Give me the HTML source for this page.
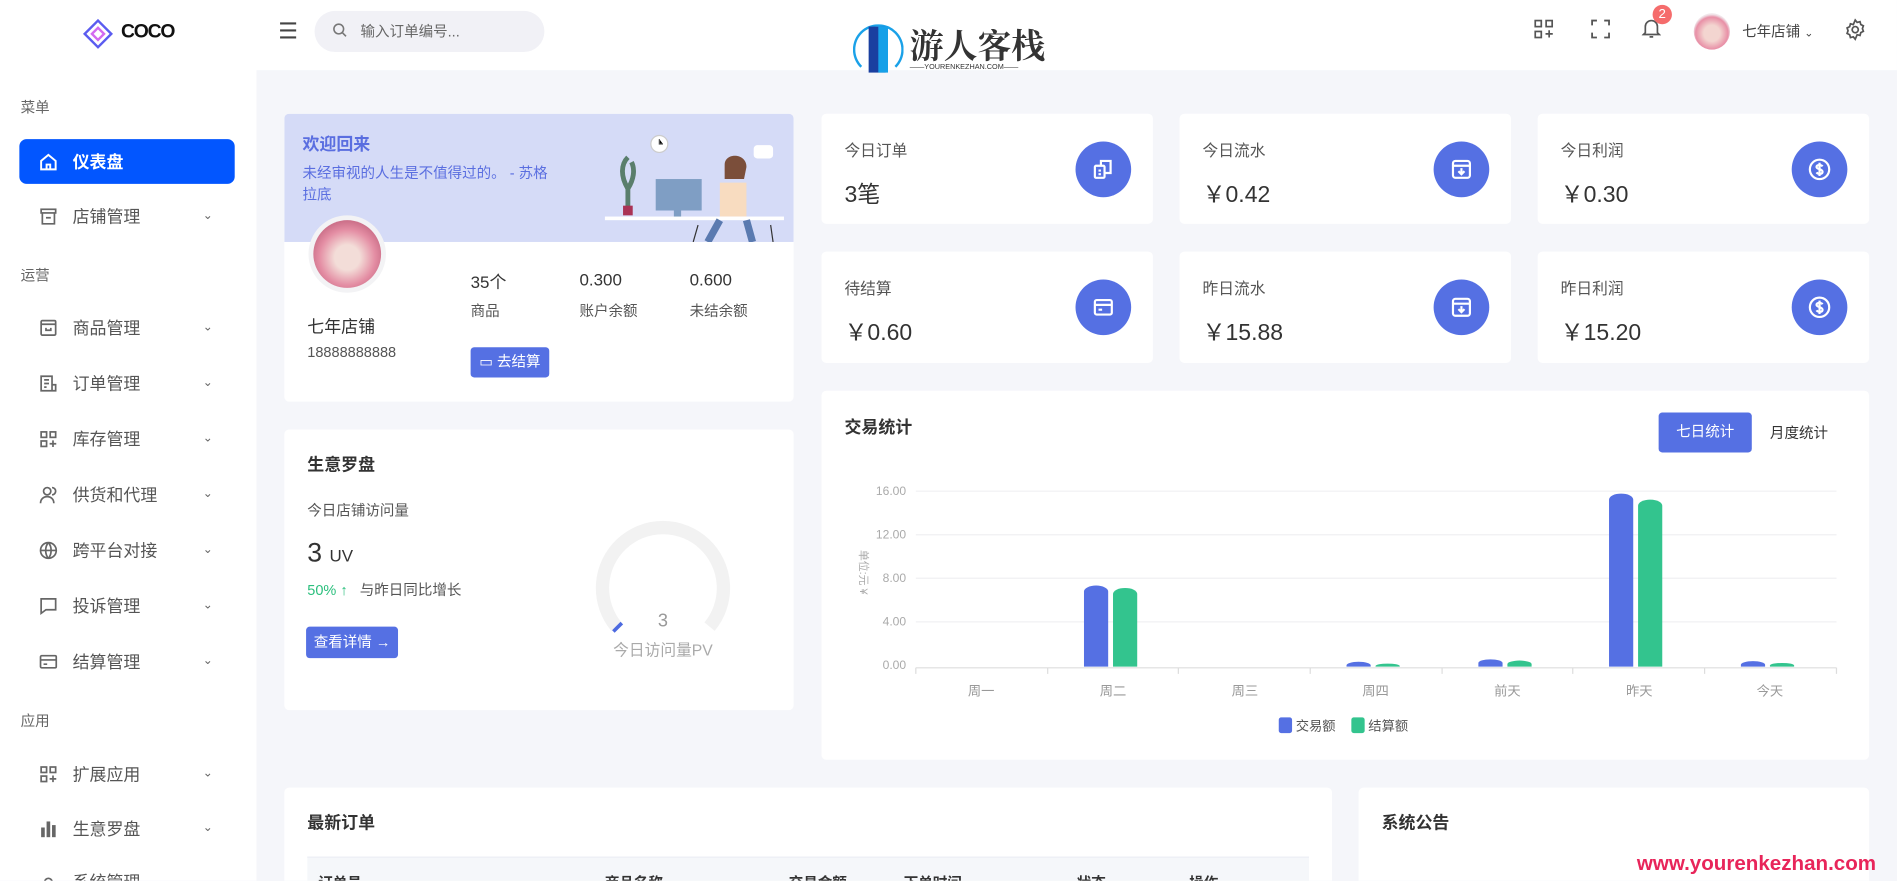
<!DOCTYPE html>
<html><head><meta charset="utf-8"><style>
*{box-sizing:border-box;margin:0;padding:0}
html,body{width:1897px;height:881px;overflow:hidden;background:#f5f6fa}
body{font-family:"Liberation Sans","Noto Sans CJK SC",sans-serif;color:#333}
#w{position:absolute;left:0;top:0;width:1568px;height:728px;transform:scale(1.2098);transform-origin:0 0;background:#f5f6fa;overflow:hidden}
.a{position:absolute}
.card{position:absolute;background:#fff;border-radius:4px}
.side{left:0;top:0;width:212px;height:728px;background:#fff}
.sec{position:absolute;left:17px;font-size:12px;color:#666}
.item{position:absolute;left:16px;width:178px;height:37px;font-size:14px;color:#555;display:flex;align-items:center}
.item svg{margin-left:16px;margin-right:12px}
.item .ch{position:absolute;right:18px;font-size:10px;color:#666}
.lbl{font-size:13px;color:#555}
.val{font-size:19px;color:#333}
.ic{position:absolute;width:46px;height:46px;border-radius:50%;background:#5570e3;display:flex;align-items:center;justify-content:center}
.t{font-size:14px;font-weight:bold;color:#333}
</style></head><body><div id="w">
<div class="a" style="left:0;top:0;width:1568px;height:58px;background:#fff"></div>
<div class="a side"></div>
<svg class="a" style="left:68px;top:15px" width="26" height="26" viewBox="0 0 26 26"><path d="M13 2 L24 13 L13 24 L2 13Z" fill="none" stroke="#5b5cf0" stroke-width="2"/><path d="M8 13 L13 8 L18 13 L13 18Z" fill="none" stroke="#d36bf0" stroke-width="2"/></svg>
<div class="a" style="left:100px;top:18px;font-size:16px;font-weight:bold;color:#111;letter-spacing:-1px">COCO</div>
<div class="a" style="left:230px;top:16px;font-size:18px;color:#444">☰</div>
<div class="a" style="left:260px;top:9px;width:190px;height:34px;border-radius:17px;background:#f1f1f6"></div>
<svg class="a" style="left:275px;top:19px" width="12" height="12" viewBox="0 0 12 12"><circle cx="5" cy="5" r="4" fill="none" stroke="#777" stroke-width="1.3"/><path d="M8 8l3 3" stroke="#777" stroke-width="1.3"/></svg>
<div class="a" style="left:298px;top:17px;font-size:12px;color:#666">输入订单编号...</div>
<div class="a" style="left:705px;top:20px;width:42px;height:42px;border-radius:50%;border:2px solid #1aa1e8;border-bottom-color:transparent"></div>
<div class="a" style="left:718px;top:22px;width:14px;height:38px;background:#1a3fa0"></div>
<div class="a" style="left:726px;top:22px;width:8px;height:38px;background:#16a0e8"></div>
<div class="a" style="left:752px;top:17px;font-size:28px;font-weight:bold;color:#333;font-family:'Noto Serif CJK SC',serif">游人客栈</div>
<div class="a" style="left:752px;top:53px;font-size:6px;color:#333">——YOURENKEZHAN.COM——</div>
<svg class="a" style="left:1268px;top:16px" width="16" height="16" viewBox="0 0 16 16" fill="none" stroke="#555" stroke-width="1.4"><rect x="1" y="1" width="5" height="5"/><rect x="10" y="1" width="5" height="5"/><rect x="1" y="10" width="5" height="5"/><path d="M12.5 9v6M9.5 12h6"/></svg>
<svg class="a" style="left:1315px;top:16px" width="16" height="16" viewBox="0 0 16 16" fill="none" stroke="#555" stroke-width="1.5"><path d="M1 5V1h4M11 1h4v4M15 11v4h-4M5 15H1v-4"/></svg>
<svg class="a" style="left:1357px;top:14px" width="16" height="18" viewBox="0 0 16 18" fill="none" stroke="#555" stroke-width="1.4"><path d="M3 13V8a5 5 0 0 1 10 0v5l1.5 1.5h-13Z"/><path d="M6.5 16.5h3"/></svg>
<div class="a" style="left:1366px;top:4px;width:16px;height:16px;border-radius:8px;background:#f56c6c;color:#fff;font-size:11px;text-align:center;line-height:16px">2</div>
<div class="a" style="left:1400px;top:11px;width:30px;height:30px;border-radius:50%;background:radial-gradient(circle at 50% 55%,#f3d5d0 30%,#e88fa6 60%,#f0e6ea 70%)"></div>
<div class="a" style="left:1440px;top:17px;font-size:12px;color:#444">七年店铺 <span style="font-size:9px">⌄</span></div>
<svg class="a" style="left:1524px;top:15px" width="19" height="19" viewBox="0 0 24 24" fill="none" stroke="#555" stroke-width="1.8"><circle cx="12" cy="12" r="3.2"/><path d="M12 2l2 2.5 3-.8.8 3 2.7 1.3-1 2.9 1 2.9-2.7 1.3-.8 3-3-.8L12 22l-2-2.5-3 .8-.8-3L3.5 16l1-2.9-1-2.9L6.2 8.9l.8-3 3 .8Z"/></svg>
<div class="sec" style="top:80px">菜单</div>
<div class="item" style="top:115px;background:#0256ff;border-radius:6px;color:#fff;font-weight:bold"><svg width="16" height="16" viewBox="0 0 16 16" fill="none" stroke="#fff" stroke-width="1.6"><path d="M2 7l6-5 6 5v7H2Z"/><path d="M6.5 14v-4h3v4"/></svg>仪表盘</div>
<div class="item" style="top:160px"><svg width="16" height="16" viewBox="0 0 16 16" fill="none" stroke="#666" stroke-width="1.4"><rect x="2" y="2" width="12" height="3"/><path d="M3 5v9h10V5M6 9h4"/></svg>店铺管理<span class="ch">⌄</span></div>
<div class="sec" style="top:219px">运营</div>
<div class="item" style="top:252px"><svg width="16" height="16" viewBox="0 0 16 16" fill="none" stroke="#666" stroke-width="1.4"><rect x="2" y="2" width="12" height="12" rx="1"/><path d="M2 5h12M6 8v2h4V8"/></svg>商品管理<span class="ch">⌄</span></div>
<div class="item" style="top:298px"><svg width="16" height="16" viewBox="0 0 16 16" fill="none" stroke="#666" stroke-width="1.4"><path d="M11 14H2V2h9v12h3V9h-3M4.5 5h4M4.5 8h4M4.5 11h2"/></svg>订单管理<span class="ch">⌄</span></div>
<div class="item" style="top:344px"><svg width="16" height="16" viewBox="0 0 16 16" fill="none" stroke="#666" stroke-width="1.4"><rect x="2" y="2" width="4.5" height="4.5"/><rect x="9.5" y="2" width="4.5" height="4.5"/><rect x="2" y="9.5" width="4.5" height="4.5"/><path d="M11.8 9v5.5M9 11.8h5.5"/></svg>库存管理<span class="ch">⌄</span></div>
<div class="item" style="top:390px"><svg width="16" height="16" viewBox="0 0 16 16" fill="none" stroke="#666" stroke-width="1.4"><circle cx="7" cy="5" r="3"/><path d="M1.5 15c0-3.5 2.5-5.5 5.5-5.5s5.5 2 5.5 5.5M11 2a3 3 0 0 1 0 6"/></svg>供货和代理<span class="ch">⌄</span></div>
<div class="item" style="top:436px"><svg width="16" height="16" viewBox="0 0 16 16" fill="none" stroke="#666" stroke-width="1.4"><circle cx="8" cy="8" r="6.5"/><path d="M1.5 8h13M8 1.5c-3 3.5-3 9.5 0 13M8 1.5c3 3.5 3 9.5 0 13"/></svg>跨平台对接<span class="ch">⌄</span></div>
<div class="item" style="top:482px"><svg width="16" height="16" viewBox="0 0 16 16" fill="none" stroke="#666" stroke-width="1.4"><path d="M2 2h12v9H6l-4 3Z"/></svg>投诉管理<span class="ch">⌄</span></div>
<div class="item" style="top:528px"><svg width="16" height="16" viewBox="0 0 16 16" fill="none" stroke="#666" stroke-width="1.4"><rect x="1.5" y="3" width="13" height="10" rx="1"/><path d="M1.5 6.5h13M4 10h3"/></svg>结算管理<span class="ch">⌄</span></div>
<div class="sec" style="top:587px">应用</div>
<div class="item" style="top:621px"><svg width="16" height="16" viewBox="0 0 16 16" fill="none" stroke="#666" stroke-width="1.4"><rect x="2" y="2" width="4.5" height="4.5"/><rect x="9.5" y="2" width="4.5" height="4.5"/><rect x="2" y="9.5" width="4.5" height="4.5"/><path d="M11.8 9v5.5M9 11.8h5.5"/></svg>扩展应用<span class="ch">⌄</span></div>
<div class="item" style="top:666px"><svg width="16" height="16" viewBox="0 0 16 16" fill="#666"><rect x="2" y="7" width="3" height="8"/><rect x="6.5" y="2" width="3" height="13"/><rect x="11" y="5" width="3" height="10"/></svg>生意罗盘<span class="ch">⌄</span></div>
<div class="item" style="top:710px"><svg width="16" height="16" viewBox="0 0 16 16" fill="none" stroke="#666" stroke-width="1.4"><circle cx="8" cy="8" r="3"/></svg>系统管理<span class="ch">⌄</span></div>
<div class="card" style="left:235px;top:94px;width:421px;height:238px;overflow:hidden">
<div class="a" style="left:0;top:0;width:421px;height:106px;background:#d5dbf7"></div>
<div class="a" style="left:15px;top:15px;font-size:14px;font-weight:bold;color:#5a6ee0">欢迎回来</div>
<div class="a" style="left:15px;top:40px;width:206px;font-size:12px;line-height:18px;color:#5a6ee0">未经审视的人生是不值得过的。 - 苏格拉底</div>
<svg class="a" style="left:262px;top:12px" width="155" height="94" viewBox="0 0 155 94"><circle cx="48" cy="13" r="7" fill="#fff" stroke="#ccc"/><path d="M48 9v4h3" stroke="#555"/><rect x="126" y="14" width="16" height="11" rx="3" fill="#fff"/><rect x="45" y="42" width="38" height="26" fill="#7f9ec4"/><rect x="60" y="68" width="6" height="6" fill="#7f9ec4"/><rect x="3" y="73" width="148" height="3" fill="#fff"/><path d="M22 70l0-20M22 50c-6-10-6-20 0-26M22 50c5-8 6-16 3-22" stroke="#5a7e6c" stroke-width="4" fill="none"/><rect x="18" y="64" width="8" height="8" fill="#a35"/><circle cx="110" cy="34" r="8" fill="#f5c9a8"/><path d="M102 30c0-10 18-10 18 2l-2 10h-16Z" fill="#7b4e3a"/><path d="M98 45h22v28H98Z" fill="#f8dcc0"/><path d="M98 76l-10 18M120 76l5 18" stroke="#5a7ab0" stroke-width="6"/><path d="M80 80l-4 14M140 80l2 14" stroke="#333"/></svg>
<div class="a" style="left:20px;top:84px;width:64px;height:64px;border-radius:50%;background:#f3f3f5"></div>
<div class="a" style="left:24px;top:88px;width:56px;height:56px;border-radius:50%;background:radial-gradient(circle at 50% 55%,#f3ddd8 25%,#e48ea4 55%,#c96c86 75%,#e6dde2)"></div>
<div class="a" style="left:19px;top:166px;font-size:14px;color:#333">七年店铺</div>
<div class="a" style="left:19px;top:190px;font-size:12px;color:#555">18888888888</div>
<div class="a" style="left:154px;top:129px;font-size:14px">35个</div><div class="a lbl" style="left:154px;top:154px;font-size:12px">商品</div>
<div class="a" style="left:244px;top:129px;font-size:14px">0.300</div><div class="a lbl" style="left:244px;top:154px;font-size:12px">账户余额</div>
<div class="a" style="left:335px;top:129px;font-size:14px">0.600</div><div class="a lbl" style="left:335px;top:154px;font-size:12px">未结余额</div>
<div class="a" style="left:154px;top:193px;width:65px;height:25px;background:#5570e3;border-radius:3px;color:#fff;font-size:12px;line-height:25px;text-align:center">▭ 去结算</div>
</div>
<div class="card" style="left:679px;top:94px;width:274px;height:91px"><div class="a lbl" style="left:19px;top:20px">今日订单</div><div class="a val" style="left:19px;top:52px">3笔</div><div class="ic" style="left:210px;top:23px"><svg width="20" height="20" viewBox="0 0 20 20" fill="none" stroke="#fff" stroke-width="1.8"><rect x="3" y="7" width="8" height="10" rx="1"/><path d="M8 7V3h8v10h-5M6 11h2M6 14h2"/></svg></div></div>
<div class="card" style="left:975px;top:94px;width:274px;height:91px"><div class="a lbl" style="left:19px;top:20px">今日流水</div><div class="a val" style="left:19px;top:52px">￥0.42</div><div class="ic" style="left:210px;top:23px"><svg width="20" height="20" viewBox="0 0 20 20" fill="none" stroke="#fff" stroke-width="1.8"><rect x="3" y="3" width="14" height="14" rx="2"/><path d="M3 7h14M10 9v5M7.5 11.5 10 14l2.5-2.5"/></svg></div></div>
<div class="card" style="left:1271px;top:94px;width:274px;height:91px"><div class="a lbl" style="left:19px;top:20px">今日利润</div><div class="a val" style="left:19px;top:52px">￥0.30</div><div class="ic" style="left:210px;top:23px"><svg width="20" height="20" viewBox="0 0 20 20" fill="none" stroke="#fff" stroke-width="1.8"><circle cx="10" cy="10" r="8"/><path d="M12.5 7.5c-1-1.5-5-1.5-5 .5s5 1.5 5 4-4 2-5 .5M10 4.5v11"/></svg></div></div>
<div class="card" style="left:679px;top:208px;width:274px;height:92px"><div class="a lbl" style="left:19px;top:20px">待结算</div><div class="a val" style="left:19px;top:52px">￥0.60</div><div class="ic" style="left:210px;top:23px"><svg width="20" height="20" viewBox="0 0 20 20" fill="none" stroke="#fff" stroke-width="1.8"><rect x="3" y="4" width="14" height="12" rx="1.5"/><path d="M3 8h14M6 12h3"/></svg></div></div>
<div class="card" style="left:975px;top:208px;width:274px;height:92px"><div class="a lbl" style="left:19px;top:20px">昨日流水</div><div class="a val" style="left:19px;top:52px">￥15.88</div><div class="ic" style="left:210px;top:23px"><svg width="20" height="20" viewBox="0 0 20 20" fill="none" stroke="#fff" stroke-width="1.8"><rect x="3" y="3" width="14" height="14" rx="2"/><path d="M3 7h14M10 9v5M7.5 11.5 10 14l2.5-2.5"/></svg></div></div>
<div class="card" style="left:1271px;top:208px;width:274px;height:92px"><div class="a lbl" style="left:19px;top:20px">昨日利润</div><div class="a val" style="left:19px;top:52px">￥15.20</div><div class="ic" style="left:210px;top:23px"><svg width="20" height="20" viewBox="0 0 20 20" fill="none" stroke="#fff" stroke-width="1.8"><circle cx="10" cy="10" r="8"/><path d="M12.5 7.5c-1-1.5-5-1.5-5 .5s5 1.5 5 4-4 2-5 .5M10 4.5v11"/></svg></div></div>
<div class="card" style="left:235px;top:355px;width:421px;height:232px">
<div class="a t" style="left:19px;top:19px">生意罗盘</div>
<div class="a" style="left:19px;top:58px;font-size:12px;color:#555">今日店铺访问量</div>
<div class="a" style="left:19px;top:89px;font-size:22px;color:#333">3 <span style="font-size:14px">UV</span></div>
<div class="a" style="left:19px;top:124px;font-size:12px;color:#555"><span style="color:#2bbf7d">50% ↑</span>&nbsp;&nbsp;&nbsp;与昨日同比增长</div>
<div class="a" style="left:18px;top:163px;width:76px;height:26px;background:#5570e3;border-radius:3px;color:#fff;font-size:12px;line-height:26px;text-align:center">查看详情 →</div>
<svg class="a" style="left:253px;top:72px" width="120" height="120" viewBox="0 0 120 120"><path d="M21.5 91A50 50 0 1 1 98.5 91" fill="none" stroke="#f2f2f2" stroke-width="11"/><path d="M19 95l7-7" stroke="#4d6ae0" stroke-width="3"/></svg>
<div class="a" style="left:300px;top:150px;width:26px;text-align:center;font-size:15px;color:#999">3</div>
<div class="a" style="left:263px;top:172px;width:100px;text-align:center;font-size:13px;color:#aaa">今日访问量PV</div>
</div>
<div class="card" style="left:679px;top:323px;width:866px;height:305px">
<div class="a t" style="left:19px;top:20px">交易统计</div>
<div class="a" style="left:692px;top:18px;width:77px;height:33px;background:#5570e3;border-radius:3px;color:#fff;font-size:12px;line-height:33px;text-align:center">七日统计</div>
<div class="a" style="left:784px;top:26px;font-size:12px;color:#333">月度统计</div>
<svg class="a" style="left:0;top:0" width="866" height="305" viewBox="0 0 866 305" font-family="Liberation Sans,Noto Sans CJK SC,sans-serif">
<g stroke="#f0f0f3"><path d="M78 83H839M78 119H839M78 155H839M78 191H839"/></g>
<path d="M78 229H839" stroke="#ddd"/>
<g stroke="#ddd"><path d="M78 229v5M187 229v5M295 229v5M404 229v5M513 229v5M621 229v5M730 229v5M839 229v5"/></g>
<g fill="#aaa" font-size="10" text-anchor="end"><text x="70" y="86">16.00</text><text x="70" y="122">12.00</text><text x="70" y="158">8.00</text><text x="70" y="194">4.00</text><text x="70" y="230">0.00</text></g>
<text x="32" y="150" fill="#aaa" font-size="9" transform="rotate(90 32 150)" text-anchor="middle">单位:元 ¥</text>
<g fill="#999" font-size="11" text-anchor="middle"><text x="132" y="252">周一</text><text x="241" y="252">周二</text><text x="350" y="252">周三</text><text x="458" y="252">周四</text><text x="567" y="252">前天</text><text x="676" y="252">昨天</text><text x="784" y="252">今天</text></g>
<g fill="#5570e3"><path d="M217 228V166a10 5 0 0 1 20 0V228Z"/><path d="M434 228v-1a10 3 0 0 1 20 0v1Z"/><path d="M543 228v-3a10 3 0 0 1 20 0v3Z"/><path d="M651 228V90a10 5 0 0 1 20 0V228Z"/><path d="M760 228v-1.5a10 3 0 0 1 20 0v1.5Z"/></g>
<g fill="#33c48e"><path d="M241 228V168a10 5 0 0 1 20 0V228Z"/><path d="M458 228v-.5a10 2 0 0 1 20 0v.5Z"/><path d="M567 228v-2a10 3 0 0 1 20 0v2Z"/><path d="M675 228V95a10 5 0 0 1 20 0V228Z"/><path d="M784 228v-1a10 2 0 0 1 20 0v1Z"/></g>
<rect x="378" y="270" width="11" height="13" rx="2" fill="#5570e3"/><text x="392" y="281" font-size="11" fill="#555">交易额</text>
<rect x="438" y="270" width="11" height="13" rx="2" fill="#33c48e"/><text x="452" y="281" font-size="11" fill="#555">结算额</text>
</svg>
</div>
<div class="card" style="left:235px;top:651px;width:866px;height:100px">
<div class="a t" style="left:19px;top:19px">最新订单</div>
<div class="a" style="left:19px;top:57px;width:828px;height:40px;background:#f5f7fa;border-top:1px solid #ebeef5"></div>
<div class="a" style="left:28px;top:70px;font-size:12px;font-weight:bold;color:#333">订单号</div>
<div class="a" style="left:265px;top:70px;font-size:12px;font-weight:bold;color:#333">商品名称</div>
<div class="a" style="left:417px;top:70px;font-size:12px;font-weight:bold;color:#333">交易金额</div>
<div class="a" style="left:512px;top:70px;font-size:12px;font-weight:bold;color:#333">下单时间</div>
<div class="a" style="left:655px;top:70px;font-size:12px;font-weight:bold;color:#333">状态</div>
<div class="a" style="left:748px;top:70px;font-size:12px;font-weight:bold;color:#333">操作</div>
</div>
<div class="card" style="left:1123px;top:651px;width:422px;height:100px"><div class="a t" style="left:19px;top:19px">系统公告</div></div>
<div class="a" style="left:1353px;top:704px;font-size:17px;font-weight:bold;color:#e8255a">www.yourenkezhan.com</div>
</div></body></html>
